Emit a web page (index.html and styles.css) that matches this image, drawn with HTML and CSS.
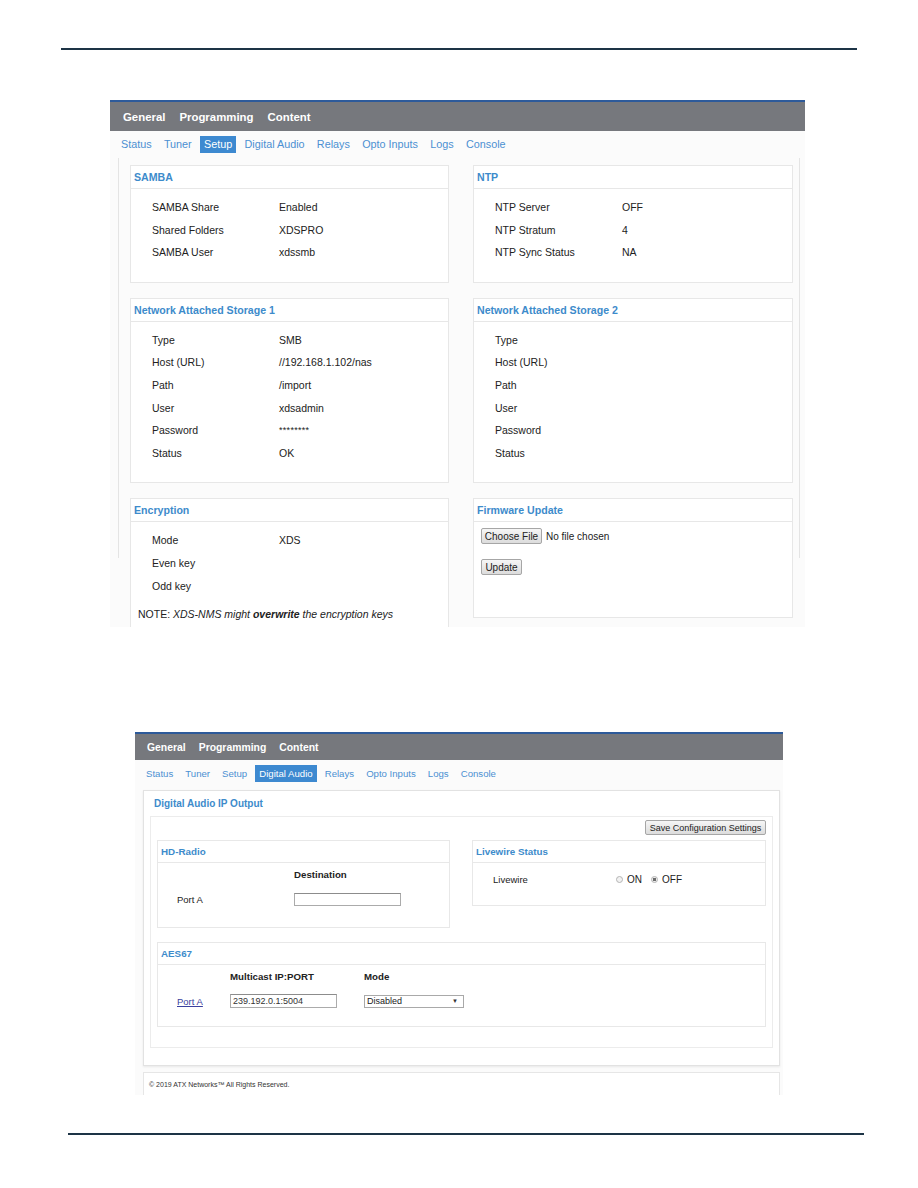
FILE: index.html
```html
<!DOCTYPE html>
<html>
<head>
<meta charset="utf-8">
<title>Setup and Digital Audio</title>
<link rel="stylesheet" href="styles.css">
</head>
<body>
<div class="rule rule-top"></div>

<section class="shot shot1">
  <div class="menubar"><span>General</span><span>Programming</span><span>Content</span></div>
  <nav class="tabs">
    <span class="tab">Status</span><span class="tab">Tuner</span><span class="tab active">Setup</span><span class="tab">Digital Audio</span><span class="tab">Relays</span><span class="tab">Opto Inputs</span><span class="tab">Logs</span><span class="tab">Console</span>
  </nav>
  <div class="content">
    <div class="setup-grid">
      <div class="panel">
        <div class="panel-head">SAMBA</div>
        <div class="kv">
          <span>SAMBA Share</span><span>Enabled</span>
          <span>Shared Folders</span><span>XDSPRO</span>
          <span>SAMBA User</span><span>xdssmb</span>
        </div>
      </div>
      <div class="panel">
        <div class="panel-head">NTP</div>
        <div class="kv">
          <span>NTP Server</span><span>OFF</span>
          <span>NTP Stratum</span><span>4</span>
          <span>NTP Sync Status</span><span>NA</span>
        </div>
      </div>
      <div class="panel">
        <div class="panel-head">Network Attached Storage 1</div>
        <div class="kv">
          <span>Type</span><span>SMB</span>
          <span>Host (URL)</span><span>//192.168.1.102/nas</span>
          <span>Path</span><span>/import</span>
          <span>User</span><span>xdsadmin</span>
          <span>Password</span><span class="stars">********</span>
          <span>Status</span><span>OK</span>
        </div>
      </div>
      <div class="panel">
        <div class="panel-head">Network Attached Storage 2</div>
        <div class="kv">
          <span>Type</span><span></span>
          <span>Host (URL)</span><span></span>
          <span>Path</span><span></span>
          <span>User</span><span></span>
          <span>Password</span><span></span>
          <span>Status</span><span></span>
        </div>
      </div>
      <div class="panel panel-enc">
        <div class="panel-head">Encryption</div>
        <div class="kv kv-tight">
          <span>Mode</span><span>XDS</span>
          <span>Even key</span><span></span>
          <span>Odd key</span><span></span>
        </div>
        <p class="note">NOTE: <i>XDS-NMS might <b>overwrite</b> the encryption keys</i></p>
      </div>
      <div class="panel panel-fw">
        <div class="panel-head">Firmware Update</div>
        <div class="fw-body">
          <div class="file-row"><button class="btn btn-file">Choose File</button><span class="nofile">No file chosen</span></div>
          <button class="btn btn-update">Update</button>
        </div>
      </div>
    </div>
  </div>
</section>

<section class="shot shot2">
  <div class="menubar"><span>General</span><span>Programming</span><span>Content</span></div>
  <nav class="tabs">
    <span class="tab">Status</span><span class="tab">Tuner</span><span class="tab">Setup</span><span class="tab active">Digital Audio</span><span class="tab">Relays</span><span class="tab">Opto Inputs</span><span class="tab">Logs</span><span class="tab">Console</span>
  </nav>
  <div class="dap">
    <div class="dap-head">Digital Audio IP Output</div>
    <div class="dap-inner">
      <div class="save-row"><button class="btn btn-save">Save Configuration Settings</button></div>
      <div class="dual">
        <div class="panel2 hd">
          <div class="panel2-head">HD-Radio</div>
          <div class="hd-body">
            <span></span><b>Destination</b>
            <span class="lbl">Port A</span><span class="field field-hd"></span>
          </div>
        </div>
        <div class="panel2 lw">
          <div class="panel2-head">Livewire Status</div>
          <div class="lw-body">
            <span class="lbl">Livewire</span>
            <span class="radios"><span class="radio"></span><span>ON</span><span class="radio checked"></span><span>OFF</span></span>
          </div>
        </div>
      </div>
      <div class="panel2 aes">
        <div class="panel2-head">AES67</div>
        <div class="aes-body">
          <span></span><b>Multicast IP:PORT</b><b>Mode</b>
          <a class="port-link">Port A</a><span class="field field-aes">239.192.0.1:5004</span><span class="select">Disabled<span class="arrow">▼</span></span>
        </div>
      </div>
    </div>
  </div>
  <footer class="foot">© 2019 ATX Networks™ All Rights Reserved.</footer>
</section>

<div class="rule rule-bottom"></div>
</body>
</html>
```

FILE: styles.css
```css
* { box-sizing: border-box; }
body {
  margin: 0;
  background: #fff;
  font-family: "Liberation Sans", Arial, sans-serif;
  color: #222;
}
.rule { height: 2px; background: #1d3446; }
.rule-top { margin: 48px 0 0 61px; width: 796px; }
.rule-bottom { margin: 38px 0 0 68px; width: 796px; }

.shot { overflow: hidden; background: #fbfbfb; }
.shot1 { margin: 50px 0 0 110px; width: 695px; height: 527px; }
.shot2 { margin: 105px 0 0 135px; width: 648px; height: 363px; }

.menubar {
  display: flex;
  align-items: center;
  border-top: 2px solid #2d5a9a;
  background: #76787d;
  color: #fff;
  font-weight: bold;
}
.shot1 .menubar { height: 31px; padding-left: 13px; gap: 14px; font-size: 11.4px; }
.shot2 .menubar { height: 28px; padding-left: 12px; gap: 13px; font-size: 10.4px; }

.tabs { display: flex; align-items: center; }
.tab { color: #4b90d2; padding: 0 4px; line-height: 17px; }
.tab.active { background: #3d89d0; color: #fff; }
.shot1 .tabs { height: 27px; padding-left: 7px; gap: 4.3px; font-size: 10.8px; }
.shot2 .tabs { height: 26px; padding-left: 7px; gap: 4.1px; font-size: 9.6px; }

/* ---------- shot 1 ---------- */
.content {
  margin-left: 8px;
  width: 682px;
  height: 400px;
  border-left: 1px solid #e4e4e4;
  border-right: 1px solid #e4e4e4;
  padding: 7px 6px 0 11px;
}
.setup-grid {
  display: grid;
  grid-template-columns: 319px 320px;
  column-gap: 24px;
  row-gap: 15px;
}
.panel { background: #fff; border: 1px solid #e7e7e7; }
.panel-head {
  height: 23px;
  display: flex;
  align-items: center;
  padding-left: 3px;
  border-bottom: 1px solid #e7e7e7;
  color: #3d8bcb;
  font-weight: bold;
  font-size: 10.6px;
}
.kv {
  display: grid;
  grid-template-columns: 127px 1fr;
  padding: 7px 0 18px 21px;
  font-size: 10.5px;
  color: #222;
}
.kv span { height: 22.6px; line-height: 22.6px; }
.kv .stars { font-size: 9px; letter-spacing: 0.3px; }
.kv-tight { padding-bottom: 0; }
.note { margin: 10px 0 20px 7px; font-size: 10.5px; color: #222; line-height: 14px; }
.note b { font-weight: bold; }
.panel-fw { align-self: start; height: 120px; }
.fw-body { padding: 6px 7px; }
.file-row { display: flex; align-items: center; }
.btn {
  font-family: "Liberation Sans", Arial, sans-serif;
  color: #222;
  border: 1px solid #a6a6a6;
  border-radius: 2px;
  background: linear-gradient(#f6f6f6, #dcdcdc);
  padding: 0;
  margin: 0;
}
.btn-file { width: 61px; height: 16px; font-size: 10px; }
.nofile { margin-left: 4px; font-size: 10px; }
.btn-update { display: block; margin-top: 15px; width: 41px; height: 16px; font-size: 10px; }

/* ---------- shot 2 ---------- */
.dap {
  margin: 4px 3px 0 8px;
  background: #fff;
  border: 1px solid #e2e2e2;
  box-shadow: 0 1px 2px rgba(0, 0, 0, 0.08);
  padding-bottom: 17px;
}
.dap-head {
  height: 25px;
  display: flex;
  align-items: center;
  padding-left: 10px;
  color: #3d8bcb;
  font-weight: bold;
  font-size: 10px;
}
.dap-inner { margin: 0 6px; border: 1px solid #ececec; padding: 3px 6px 20px 6px; }
.save-row { display: flex; justify-content: flex-end; }
.btn-save { width: 121px; height: 15px; font-size: 9px; }
.dual {
  margin-top: 5px;
  display: grid;
  grid-template-columns: 293px 294px;
  column-gap: 22px;
  align-items: start;
}
.panel2 { background: #fff; border: 1px solid #e8e8e8; }
.panel2-head {
  height: 22px;
  display: flex;
  align-items: center;
  padding-left: 3px;
  border-bottom: 1px solid #e8e8e8;
  color: #3d8bcb;
  font-weight: bold;
  font-size: 9.8px;
}
.lbl { font-size: 9.5px; color: #222; }
.hd-body {
  display: grid;
  grid-template-columns: 117px 1fr;
  grid-template-rows: 16px 22px;
  row-gap: 6px;
  align-items: center;
  padding: 3px 0 17px 19px;
  font-size: 9.7px;
}
.field {
  display: block;
  background: #fff;
  border: 1px solid #ababab;
  border-top-color: #8c8c8c;
  font-size: 9px;
  color: #333;
  padding-left: 2px;
}
.field-hd { width: 107px; height: 13px; }
.lw-body {
  display: grid;
  grid-template-columns: 123px 1fr;
  align-items: center;
  height: 42px;
  padding: 0 0 10px 20px;
}
.radios { display: flex; align-items: center; gap: 3px; font-size: 10px; color: #222; }
.radio {
  width: 7px;
  height: 7px;
  border-radius: 50%;
  border: 1px solid #b4b4b4;
  background: #f2f2f2;
  margin-right: 1px;
}
.radios span:nth-child(2) { margin-right: 6px; }
.radio.checked { background: radial-gradient(circle, #6d6d6d 0 1.5px, #eee 2px); }
.aes { margin-top: 14px; }
.aes-body {
  display: grid;
  grid-template-columns: 53px 134px 1fr;
  grid-template-rows: 16px 22px;
  row-gap: 6px;
  align-items: center;
  padding: 3px 0 14px 19px;
  font-size: 9.7px;
}
.port-link { color: #3a3f9e; text-decoration: underline; font-size: 9.5px; }
.field-aes { width: 107px; height: 14px; line-height: 12px; }
.select {
  display: flex;
  justify-content: space-between;
  align-items: center;
  width: 100px;
  height: 13px;
  border: 1px solid #a9a9a9;
  background: #fff;
  font-size: 9px;
  color: #222;
  padding: 0 5px 0 2px;
}
.arrow { font-size: 6px; color: #333; }
.foot {
  margin: 6px 3px 0 8px;
  height: 40px;
  background: #fff;
  border: 1px solid #e6e6e6;
  border-bottom: none;
  padding: 8px 0 0 5px;
  font-size: 7px;
  color: #333;
}
```
